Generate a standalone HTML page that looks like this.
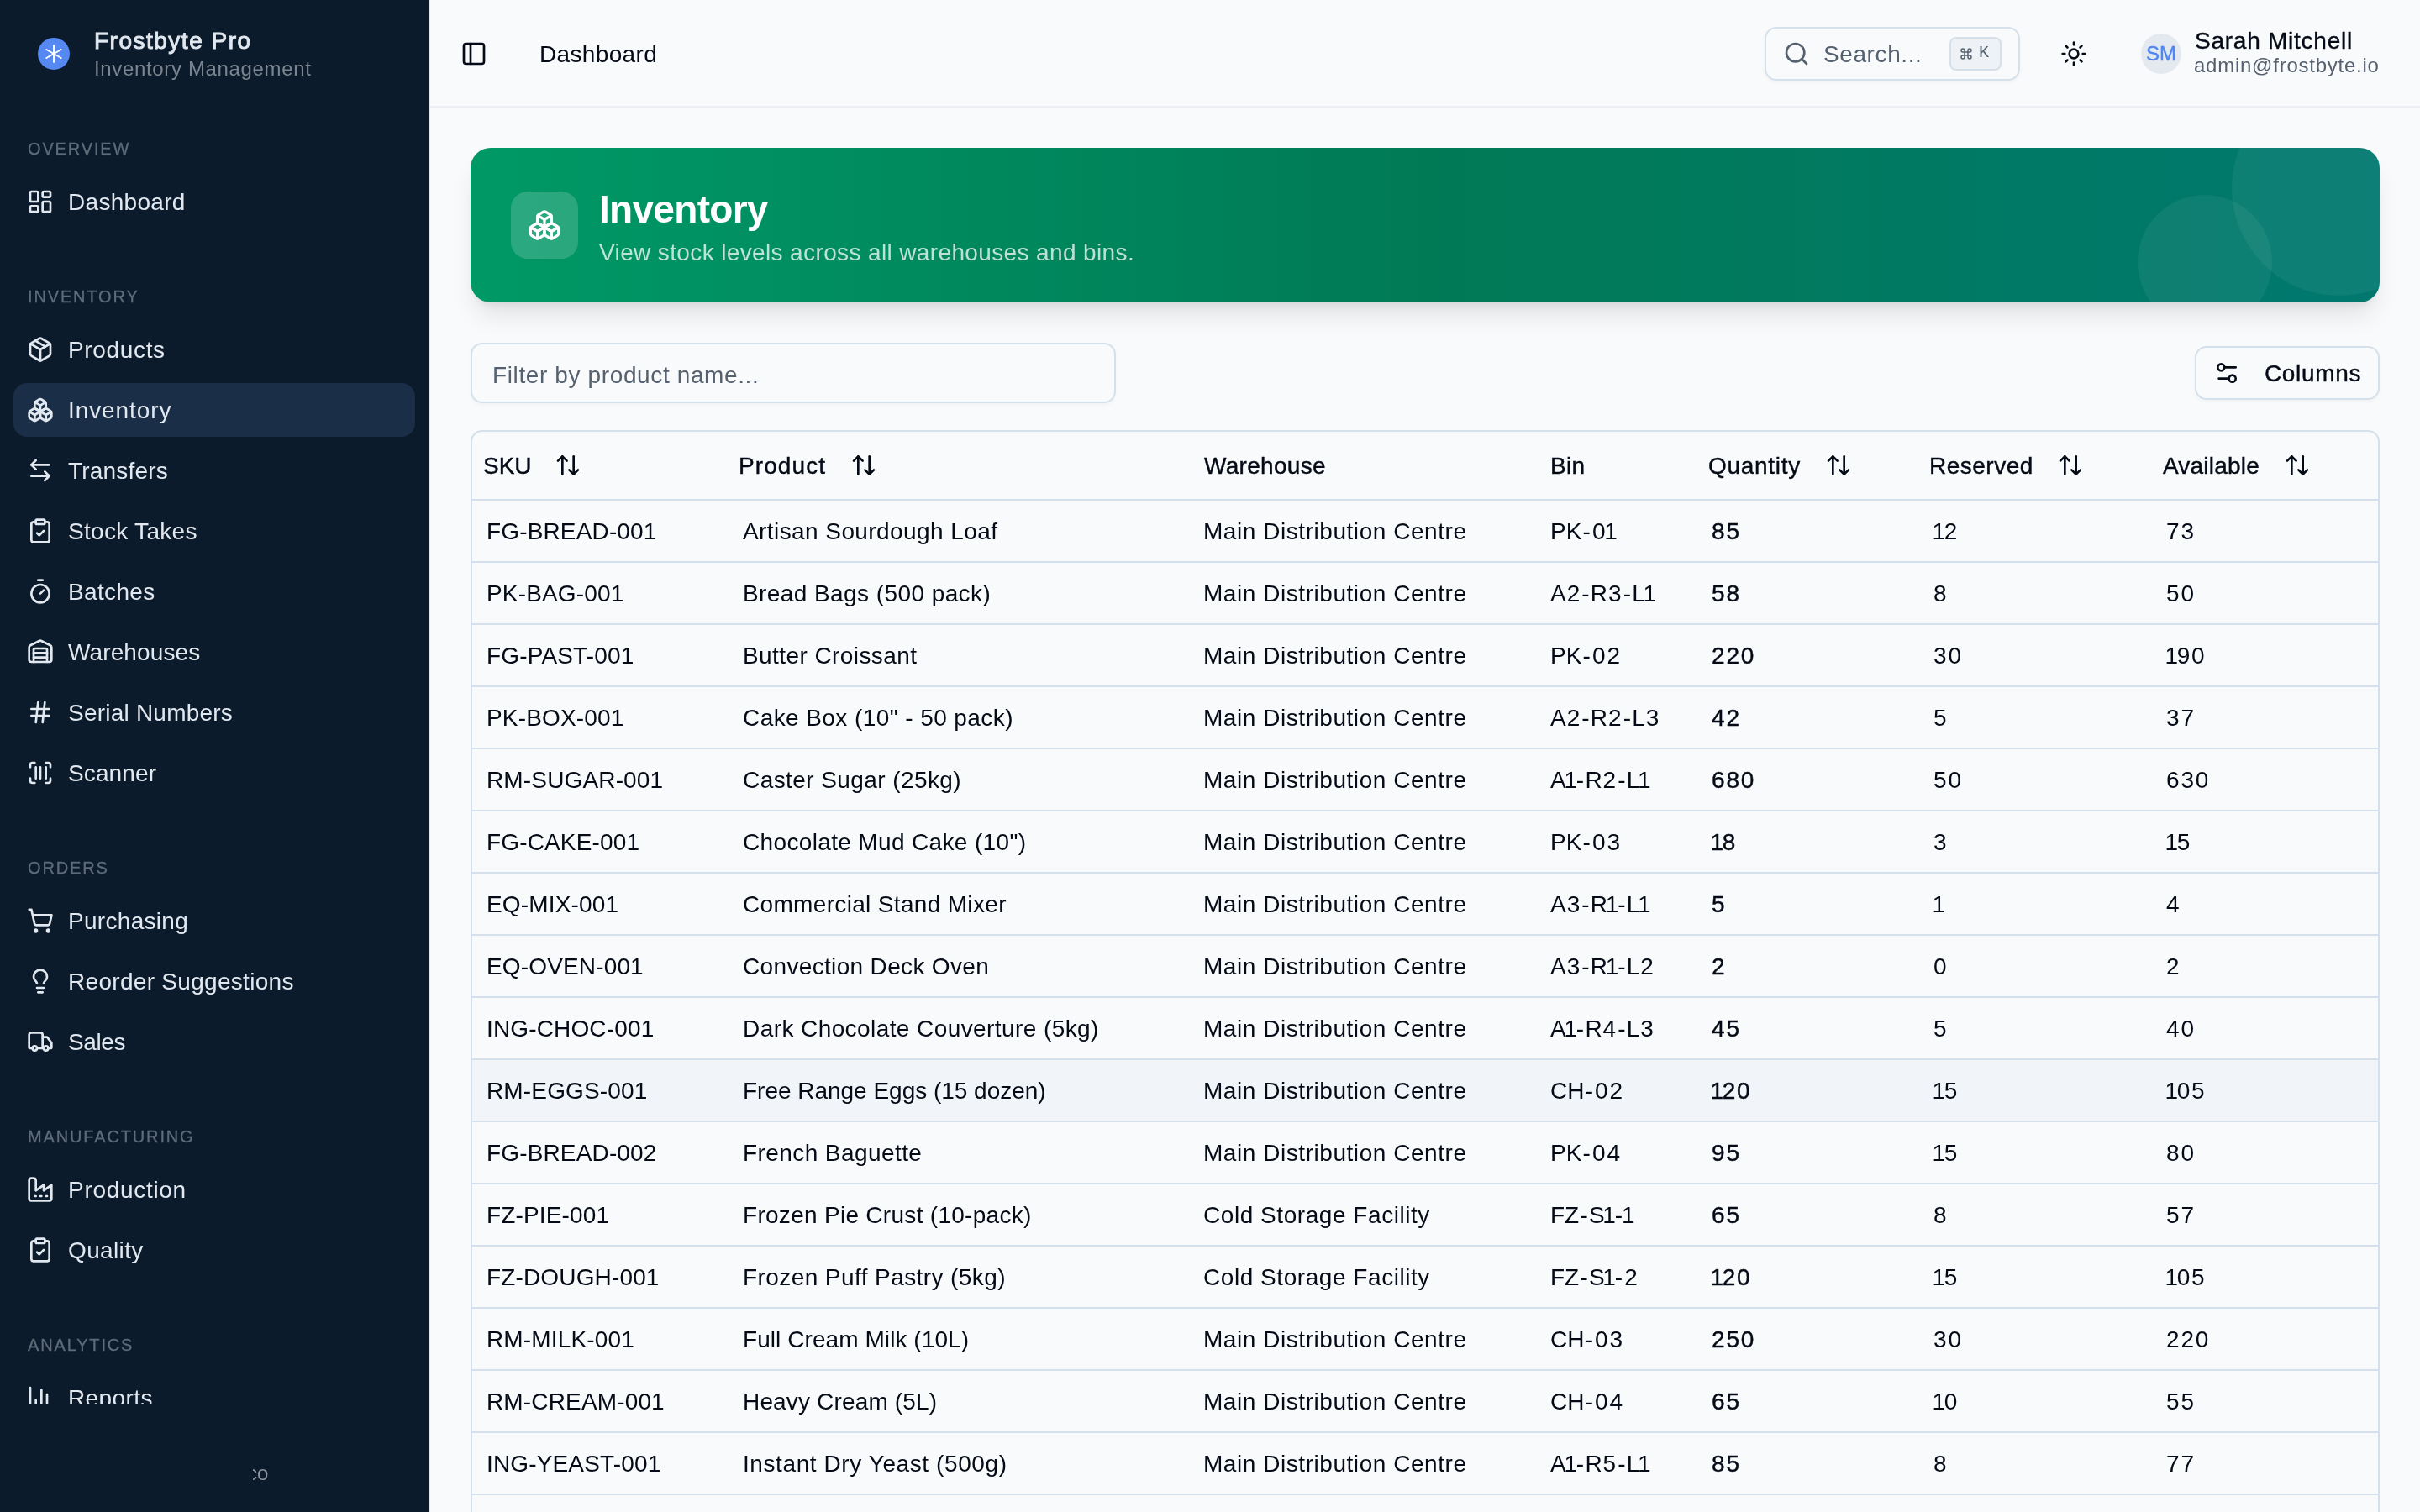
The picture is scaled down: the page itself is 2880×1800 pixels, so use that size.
<!DOCTYPE html><html lang="en"><head><meta charset="utf-8"><title>Inventory</title><style>
*{box-sizing:border-box;margin:0;padding:0}
html,body{width:2880px;height:1800px;overflow:hidden;background:#f9fafc}
body{font-family:"Liberation Sans",sans-serif;color:#050b16;position:relative;font-size:28px;line-height:1}
#sb,#hd,#banner,#tbl,body>.t{will-change:transform}
i{font-style:normal}.dn{margin:0 .95px}.d1{margin:0 -2.3px}.d1f{margin:0 -2.3px 0 -.6px}.hy{margin:0 1.2px}
.abs{position:absolute}
.t{position:absolute;white-space:nowrap;line-height:40px;height:40px}
.med{-webkit-text-stroke:0.42px currentColor}
#sb{position:absolute;left:0;top:0;width:512px;height:1800px;background:#0b1b2b;border-right:2px solid #dfe6ee;color:#e2e8f0}
#nav{position:absolute;left:0;top:128px;width:510px;height:1544px;overflow:hidden}
.gl{position:absolute;left:33px;font-size:20px;line-height:28px;height:28px;color:#5f6b78;white-space:nowrap;-webkit-text-stroke:0.3px currentColor}
.ni{position:absolute;left:16px;width:478px;height:64px;border-radius:16px}
.ni.act{background:#1a2e47}
.ni svg{position:absolute;left:16px;top:16px}
.ni span{position:absolute;left:65px;top:12px;line-height:40px;white-space:nowrap;font-size:28px}
#hd{position:absolute;left:512px;top:0;width:2368px;height:128px;border-bottom:2px solid #ebeef2}
#banner{position:absolute;left:560px;top:176px;width:2272px;height:184px;border-radius:24px;overflow:hidden;
 background:linear-gradient(90deg,#009966 0%,#007a55 50%,#00786f 100%)}
#bshadow{position:absolute;left:560px;top:176px;width:2272px;height:184px;border-radius:24px;
 box-shadow:0 20px 30px -6px rgba(0,0,0,.10),0 8px 12px -8px rgba(0,0,0,.10)}
.circ{position:absolute;border-radius:50%;background:rgba(255,255,255,.055)}
#tbl{position:absolute;left:560px;top:512px;width:2272px;height:1400px;border:2px solid #d6e0ea;border-radius:14px;overflow:hidden}
.row{position:absolute;left:0;width:2268px;height:74px;border-bottom:2px solid #d6e0ea}
.row.hov{background:#f1f5f9}
.c{position:absolute;top:16px;line-height:40px;height:40px;white-space:nowrap;font-size:28px}
.hrow{position:absolute;left:0;top:0;width:2268px;height:82px;border-bottom:2px solid #d6e0ea}
.h{position:absolute;top:20px;line-height:40px;height:40px;white-space:nowrap;font-size:28px}
</style></head><body>
<div id="sb">
<div class="abs" style="left:45px;top:45px;width:38px;height:38px;border-radius:50%;background:#5588f0"></div>
<svg class="abs" style="left:45px;top:45px" width="38" height="38" viewBox="0 0 38 38" fill="none" stroke="#fff" stroke-width="2" stroke-linecap="round"><path d="M19 9v20"/><path d="M10.300 14l17.400 10"/><path d="M27.700 14l-17.400 10"/></svg>
<div class="t" id="brand" style="left:112px;top:29px;font-size:28px;-webkit-text-stroke:0.95px currentColor;color:#e2e8f0;letter-spacing:1.5px;">Frostbyte Pro</div>
<div class="t" id="brand2" style="left:112px;top:62px;font-size:24px;color:#7b858f;letter-spacing:0.65px;">Inventory Management</div>
<div id="nav">
<div class="gl" id="gl0" style="top:35px;letter-spacing:1.85px;">OVERVIEW</div>
<div class="ni" style="top:80px"><svg width="32" height="32" viewBox="0 0 24 24" fill="none" stroke="currentColor" stroke-width="2" stroke-linecap="round" stroke-linejoin="round" style=""><rect width="7" height="9" x="3" y="3" rx="1"/><rect width="7" height="5" x="14" y="3" rx="1"/><rect width="7" height="9" x="14" y="12" rx="1"/><rect width="7" height="5" x="3" y="16" rx="1"/></svg><span id="ni_Dashboard" style="top:13px;letter-spacing:0.3px">Dashboard</span></div>
<div class="gl" id="gl1" style="top:211px;letter-spacing:1.85px;">INVENTORY</div>
<div class="ni" style="top:256px"><svg width="32" height="32" viewBox="0 0 24 24" fill="none" stroke="currentColor" stroke-width="2" stroke-linecap="round" stroke-linejoin="round" style=""><path d="M11 21.73a2 2 0 0 0 2 0l7-4A2 2 0 0 0 21 16V8a2 2 0 0 0-1-1.73l-7-4a2 2 0 0 0-2 0l-7 4A2 2 0 0 0 3 8v8a2 2 0 0 0 1 1.73z"/><path d="M12 22V12"/><path d="M3.29 7 12 12l8.71-5"/><path d="m7.5 4.27 9 5.15"/></svg><span id="ni_Products" style="top:13px;letter-spacing:0.66px">Products</span></div>
<div class="ni act" style="top:328px"><svg width="32" height="32" viewBox="0 0 24 24" fill="none" stroke="currentColor" stroke-width="2" stroke-linecap="round" stroke-linejoin="round" style=""><path d="M2.97 12.92A2 2 0 0 0 2 14.63v3.24a2 2 0 0 0 .97 1.71l3 1.8a2 2 0 0 0 2.06 0L12 19v-5.5l-5-3-4.03 2.42Z"/><path d="m7 16.5-4.74-2.85"/><path d="m7 16.5 5-3"/><path d="M7 16.5v5.17"/><path d="M12 13.5V19l3.97 2.38a2 2 0 0 0 2.06 0l3-1.8a2 2 0 0 0 .97-1.71v-3.24a2 2 0 0 0-.97-1.71L17 10.5l-5 3Z"/><path d="m17 16.5-5-3"/><path d="m17 16.5 4.74-2.85"/><path d="M17 16.5v5.17"/><path d="M7.97 4.42A2 2 0 0 0 7 6.13v4.37l5 3 5-3V6.13a2 2 0 0 0-.97-1.71l-3-1.8a2 2 0 0 0-2.06 0l-3 1.8Z"/><path d="M12 8 7.26 5.15"/><path d="m12 8 4.74-2.85"/><path d="M12 13.5V8"/></svg><span id="ni_Inventory" style="top:13px;letter-spacing:0.92px">Inventory</span></div>
<div class="ni" style="top:400px"><svg width="32" height="32" viewBox="0 0 24 24" fill="none" stroke="currentColor" stroke-width="2" stroke-linecap="round" stroke-linejoin="round" style=""><path d="M8 3 4 7l4 4"/><path d="M4 7h16"/><path d="m16 21 4-4-4-4"/><path d="M20 17H4"/></svg><span id="ni_Transfers" style="top:13px;letter-spacing:0.2px">Transfers</span></div>
<div class="ni" style="top:472px"><svg width="32" height="32" viewBox="0 0 24 24" fill="none" stroke="currentColor" stroke-width="2" stroke-linecap="round" stroke-linejoin="round" style=""><rect width="8" height="4" x="8" y="2" rx="1" ry="1"/><path d="M16 4h2a2 2 0 0 1 2 2v14a2 2 0 0 1-2 2H6a2 2 0 0 1-2-2V6a2 2 0 0 1 2-2h2"/><path d="m9 14 2 2 4-4"/></svg><span id="ni_Stock_Takes" style="top:13px;letter-spacing:0.3px">Stock Takes</span></div>
<div class="ni" style="top:544px"><svg width="32" height="32" viewBox="0 0 24 24" fill="none" stroke="currentColor" stroke-width="2" stroke-linecap="round" stroke-linejoin="round" style=""><path d="M10 2h4"/><path d="M12 14l3-3"/><circle cx="12" cy="14" r="8"/></svg><span id="ni_Batches" style="top:13px;letter-spacing:0.35px">Batches</span></div>
<div class="ni" style="top:616px"><svg width="32" height="32" viewBox="0 0 24 24" fill="none" stroke="currentColor" stroke-width="2" stroke-linecap="round" stroke-linejoin="round" style=""><path d="M18 21V10a1 1 0 0 0-1-1H7a1 1 0 0 0-1 1v11"/><path d="M22 19a2 2 0 0 1-2 2H4a2 2 0 0 1-2-2V8a2 2 0 0 1 1.132-1.803l7.950-3.974a2 2 0 0 1 1.837 0l7.948 3.974A2 2 0 0 1 22 8z"/><path d="M6 13h12"/><path d="M6 17h12"/></svg><span id="ni_Warehouses" style="top:13px;letter-spacing:0.12px">Warehouses</span></div>
<div class="ni" style="top:688px"><svg width="32" height="32" viewBox="0 0 24 24" fill="none" stroke="currentColor" stroke-width="2" stroke-linecap="round" stroke-linejoin="round" style=""><path d="M4 9h16"/><path d="M4 15h16"/><path d="M10 3 8 21"/><path d="M16 3l-2 18"/></svg><span id="ni_Serial_Numbers" style="top:13px;letter-spacing:0.22px">Serial Numbers</span></div>
<div class="ni" style="top:760px"><svg width="32" height="32" viewBox="0 0 24 24" fill="none" stroke="currentColor" stroke-width="2" stroke-linecap="round" stroke-linejoin="round" style=""><path d="M3 7V5a2 2 0 0 1 2-2h2"/><path d="M17 3h2a2 2 0 0 1 2 2v2"/><path d="M21 17v2a2 2 0 0 1-2 2h-2"/><path d="M7 21H5a2 2 0 0 1-2-2v-2"/><path d="M8 7v10"/><path d="M12 7v10"/><path d="M17 7v10"/></svg><span id="ni_Scanner" style="top:13px;letter-spacing:0.12px">Scanner</span></div>
<div class="gl" id="gl2" style="top:891px;letter-spacing:1.85px;">ORDERS</div>
<div class="ni" style="top:936px"><svg width="32" height="32" viewBox="0 0 24 24" fill="none" stroke="currentColor" stroke-width="2" stroke-linecap="round" stroke-linejoin="round" style=""><circle cx="8" cy="21" r="1"/><circle cx="19" cy="21" r="1"/><path d="M2.05 2.05h2l2.660 12.420a2 2 0 0 0 2 1.580h9.780a2 2 0 0 0 1.950-1.570l1.650-7.430H5.120"/></svg><span id="ni_Purchasing" style="top:13px;letter-spacing:0.3px">Purchasing</span></div>
<div class="ni" style="top:1008px"><svg width="32" height="32" viewBox="0 0 24 24" fill="none" stroke="currentColor" stroke-width="2" stroke-linecap="round" stroke-linejoin="round" style=""><path d="M15 14c.2-1 .7-1.700 1.500-2.500 1-.9 1.500-2.200 1.500-3.500A6 6 0 0 0 6 8c0 1 .2 2.200 1.500 3.500.7.700 1.300 1.500 1.500 2.500"/><path d="M9 18h6"/><path d="M10 22h4"/></svg><span id="ni_Reorder_Suggestions" style="top:13px;letter-spacing:0.3px">Reorder Suggestions</span></div>
<div class="ni" style="top:1080px"><svg width="32" height="32" viewBox="0 0 24 24" fill="none" stroke="currentColor" stroke-width="2" stroke-linecap="round" stroke-linejoin="round" style=""><path d="M14 18V6a2 2 0 0 0-2-2H4a2 2 0 0 0-2 2v11a1 1 0 0 0 1 1h2"/><path d="M15 18H9"/><path d="M19 18h2a1 1 0 0 0 1-1v-3.650a1 1 0 0 0-.220-.624l-3.480-4.350A1 1 0 0 0 17.520 8H14"/><circle cx="17" cy="18" r="2"/><circle cx="7" cy="18" r="2"/></svg><span id="ni_Sales" style="top:13px;letter-spacing:-0.4px">Sales</span></div>
<div class="gl" id="gl3" style="top:1211px;letter-spacing:1.85px;">MANUFACTURING</div>
<div class="ni" style="top:1256px"><svg width="32" height="32" viewBox="0 0 24 24" fill="none" stroke="currentColor" stroke-width="2" stroke-linecap="round" stroke-linejoin="round" style=""><path d="M2 20a2 2 0 0 0 2 2h16a2 2 0 0 0 2-2V8l-7 5V8l-7 5V4a2 2 0 0 0-2-2H4a2 2 0 0 0-2 2Z"/><path d="M17 18h1"/><path d="M12 18h1"/><path d="M7 18h1"/></svg><span id="ni_Production" style="top:13px;letter-spacing:0.7px">Production</span></div>
<div class="ni" style="top:1328px"><svg width="32" height="32" viewBox="0 0 24 24" fill="none" stroke="currentColor" stroke-width="2" stroke-linecap="round" stroke-linejoin="round" style=""><rect width="8" height="4" x="8" y="2" rx="1" ry="1"/><path d="M16 4h2a2 2 0 0 1 2 2v14a2 2 0 0 1-2 2H6a2 2 0 0 1-2-2V6a2 2 0 0 1 2-2h2"/><path d="m9 14 2 2 4-4"/></svg><span id="ni_Quality" style="top:13px;letter-spacing:0.37px">Quality</span></div>
<div class="gl" id="gl4" style="top:1459px;letter-spacing:1.85px;">ANALYTICS</div>
<div class="ni" style="top:1504px"><svg width="32" height="32" viewBox="0 0 24 24" fill="none" stroke="currentColor" stroke-width="2" stroke-linecap="round" stroke-linejoin="round" style=""><path d="M3 3v18h18"/><path d="M18 17V9"/><path d="M13 17V5"/><path d="M8 17v-3"/></svg><span id="ni_Reports" style="top:13px;letter-spacing:0.4px">Reports</span></div>
</div>
<div class="abs" style="left:301px;top:1736px;width:22px;height:36px;overflow:hidden"><span class="abs" style="left:-7px;top:0;line-height:36px;font-size:24px;color:#8d959e;white-space:nowrap">co</span></div>
</div>
<div id="hd">
<svg width="32" height="32" viewBox="0 0 24 24" fill="none" stroke="currentColor" stroke-width="2" stroke-linecap="round" stroke-linejoin="round" style="position:absolute;left:36px;top:48px;"><rect width="18" height="18" x="3" y="3" rx="2"/><path d="M9 3v18"/></svg>
<div class="t" id="crumb" style="left:130px;top:45px;letter-spacing:0.35px;">Dashboard</div>
<div class="abs" style="left:1588px;top:32px;width:304px;height:64px;border:2px solid #d6e0ea;border-radius:14px;box-shadow:0 2px 4px rgba(0,0,0,.035)"></div>
<svg width="32" height="32" viewBox="0 0 24 24" fill="none" stroke="#56616f" stroke-width="2" stroke-linecap="round" stroke-linejoin="round" style="position:absolute;left:1610px;top:48px;"><circle cx="11" cy="11" r="8"/><path d="m21 21-4.300-4.300"/></svg>
<div class="t" id="search" style="left:1658px;top:45px;color:#56616f;letter-spacing:0.6px;">Search...</div>
<div class="abs" style="left:1808px;top:44px;width:62px;height:40px;border:2px solid #d6e0ea;border-radius:8px;background:#eef1f5"></div>
<svg width="16" height="16" viewBox="0 0 24 24" fill="none" stroke="#56616f" stroke-width="2.2" stroke-linecap="round" stroke-linejoin="round" style="position:absolute;left:1820px;top:56px;"><path d="M15 6v12a3 3 0 1 0 3-3H6a3 3 0 1 0 3 3V6a3 3 0 1 0-3 3h12a3 3 0 1 0-3-3"/></svg>
<div class="t" id="kbdk" style="left:1843px;top:43px;font-size:20px;color:#56616f;font-family:'Liberation Mono',monospace">K</div>
<svg width="32" height="32" viewBox="0 0 24 24" fill="none" stroke="currentColor" stroke-width="2" stroke-linecap="round" stroke-linejoin="round" style="position:absolute;left:1940px;top:48px;"><circle cx="12" cy="12" r="4"/><path d="M12 2v2"/><path d="M12 20v2"/><path d="m4.930 4.930 1.410 1.410"/><path d="m17.660 17.660 1.410 1.410"/><path d="M2 12h2"/><path d="M20 12h2"/><path d="m6.340 17.660-1.410 1.410"/><path d="m19.070 4.930-1.410 1.410"/></svg>
<div class="abs" style="left:2036px;top:40px;width:48px;height:48px;border-radius:50%;background:#e4e9f0"></div>
<div class="t med" id="sm" style="left:2042px;top:44px;font-size:24px;color:#4f86f0;letter-spacing:0px;">SM</div>
<div class="t med" id="uname" style="left:2100px;top:29px;letter-spacing:0.75px;">Sarah Mitchell</div>
<div class="t" id="email" style="left:2099px;top:58px;font-size:24px;color:#56616f;letter-spacing:0.75px;">admin@frostbyte.io</div>
</div>
<div id="bshadow"></div><div id="banner">
<div class="circ" style="left:2096px;top:-80px;width:256px;height:256px"></div>
<div class="circ" style="left:1984px;top:56px;width:160px;height:160px"></div>
<div class="abs" style="left:48px;top:52px;width:80px;height:80px;border-radius:20px;background:rgba(255,255,255,.17)"></div>
<svg width="40" height="40" viewBox="0 0 24 24" fill="none" stroke="#fff" stroke-width="2" stroke-linecap="round" stroke-linejoin="round" style="position:absolute;left:68px;top:72px;"><path d="M2.97 12.92A2 2 0 0 0 2 14.63v3.24a2 2 0 0 0 .97 1.71l3 1.8a2 2 0 0 0 2.06 0L12 19v-5.5l-5-3-4.03 2.42Z"/><path d="m7 16.5-4.74-2.85"/><path d="m7 16.5 5-3"/><path d="M7 16.5v5.17"/><path d="M12 13.5V19l3.97 2.38a2 2 0 0 0 2.06 0l3-1.8a2 2 0 0 0 .97-1.71v-3.24a2 2 0 0 0-.97-1.71L17 10.5l-5 3Z"/><path d="m17 16.5-5-3"/><path d="m17 16.5 4.74-2.85"/><path d="M17 16.5v5.17"/><path d="M7.97 4.42A2 2 0 0 0 7 6.13v4.37l5 3 5-3V6.13a2 2 0 0 0-.97-1.71l-3-1.8a2 2 0 0 0-2.06 0l-3 1.8Z"/><path d="M12 8 7.26 5.15"/><path d="m12 8 4.74-2.85"/><path d="M12 13.5V8"/></svg>
<div class="t" id="title" style="left:153px;top:41px;font-size:46px;line-height:64px;height:64px;font-weight:bold;color:#fff;letter-spacing:-0.7px;">Inventory</div>
<div class="t" id="sub" style="left:153px;top:105px;color:rgba(255,255,255,.74);letter-spacing:0.37px;">View stock levels across all warehouses and bins.</div>
</div>
<div class="abs" style="left:560px;top:408px;width:768px;height:72px;border:2px solid #d6e0ea;border-radius:14px;box-shadow:0 2px 4px rgba(0,0,0,.035)"></div>
<div class="t" id="filter" style="left:586px;top:427px;color:#56616f;letter-spacing:0.62px;">Filter by product name...</div>
<div class="abs" style="left:2612px;top:412px;width:220px;height:64px;border:2px solid #d6e0ea;border-radius:14px;box-shadow:0 2px 4px rgba(0,0,0,.035)"></div>
<svg width="32" height="32" viewBox="0 0 24 24" fill="none" stroke="currentColor" stroke-width="2" stroke-linecap="round" stroke-linejoin="round" style="position:absolute;left:2634px;top:428px;"><path d="M20 7h-9"/><path d="M14 17H5"/><circle cx="17" cy="17" r="3"/><circle cx="7" cy="7" r="3"/></svg>
<div class="t med" id="columns" style="left:2695px;top:425px;letter-spacing:0.65px;">Columns</div>
<div id="tbl">
<div class="hrow">
<div class="h med" id="h_sku" style="left:13px;top:21px;letter-spacing:0px;">SKU</div>
<svg width="32" height="32" viewBox="0 0 24 24" fill="none" stroke="currentColor" stroke-width="2" stroke-linecap="round" stroke-linejoin="round" style="position:absolute;left:98px;top:24px;"><path d="m21 16-4 4-4-4"/><path d="M17 20V4"/><path d="m3 8 4-4 4 4"/><path d="M7 4v16"/></svg>
<div class="h med" id="h_product" style="left:317px;top:21px;letter-spacing:1.1px;">Product</div>
<svg width="32" height="32" viewBox="0 0 24 24" fill="none" stroke="currentColor" stroke-width="2" stroke-linecap="round" stroke-linejoin="round" style="position:absolute;left:450px;top:24px;"><path d="m21 16-4 4-4-4"/><path d="M17 20V4"/><path d="m3 8 4-4 4 4"/><path d="M7 4v16"/></svg>
<div class="h med" id="h_wh" style="left:871px;top:21px;letter-spacing:0.3px;">Warehouse</div>
<div class="h med" id="h_bin" style="left:1283px;top:21px;letter-spacing:0.3px;">Bin</div>
<div class="h med" id="h_qty" style="left:1471px;top:21px;letter-spacing:0.7px;">Quantity</div>
<svg width="32" height="32" viewBox="0 0 24 24" fill="none" stroke="currentColor" stroke-width="2" stroke-linecap="round" stroke-linejoin="round" style="position:absolute;left:1610px;top:24px;"><path d="m21 16-4 4-4-4"/><path d="M17 20V4"/><path d="m3 8 4-4 4 4"/><path d="M7 4v16"/></svg>
<div class="h med" id="h_res" style="left:1734px;top:21px;letter-spacing:0.5px;">Reserved</div>
<svg width="32" height="32" viewBox="0 0 24 24" fill="none" stroke="currentColor" stroke-width="2" stroke-linecap="round" stroke-linejoin="round" style="position:absolute;left:1886px;top:24px;"><path d="m21 16-4 4-4-4"/><path d="M17 20V4"/><path d="m3 8 4-4 4 4"/><path d="M7 4v16"/></svg>
<div class="h med" id="h_av" style="left:2012px;top:21px;letter-spacing:0.2px;">Available</div>
<svg width="32" height="32" viewBox="0 0 24 24" fill="none" stroke="currentColor" stroke-width="2" stroke-linecap="round" stroke-linejoin="round" style="position:absolute;left:2156px;top:24px;"><path d="m21 16-4 4-4-4"/><path d="M17 20V4"/><path d="m3 8 4-4 4 4"/><path d="M7 4v16"/></svg>
</div>
<div class="row" style="top:82px">
<div class="c" id="r0c_sku" style="left:17px;top:17px;letter-spacing:0.15px;">FG-BREAD-001</div>
<div class="c" id="r0c_product" style="left:322px;top:17px;letter-spacing:0.42px;">Artisan Sourdough Loaf</div>
<div class="c" id="r0c_wh" style="left:870px;top:17px;letter-spacing:0.55px;">Main Distribution Centre</div>
<div class="c" id="r0c_bin" style="left:1283px;top:17px;letter-spacing:0px;">PK<i class="hy">-</i><i class="dn">0</i><i class="d1">1</i></div>
<div class="c med" id="r0c_qty" style="left:1474px;top:17px;letter-spacing:0px;"><i class="dn">8</i><i class="dn">5</i></div>
<div class="c" id="r0c_res" style="left:1738px;top:17px;letter-spacing:0px;"><i class="d1f">1</i><i class="dn">2</i></div>
<div class="c" id="r0c_av" style="left:2015px;top:17px;letter-spacing:0px;"><i class="dn">7</i><i class="dn">3</i></div>
</div>
<div class="row" style="top:156px">
<div class="c" id="r1c_sku" style="left:17px;top:17px;letter-spacing:0.15px;">PK-BAG-001</div>
<div class="c" id="r1c_product" style="left:322px;top:17px;letter-spacing:0.42px;">Bread Bags (500 pack)</div>
<div class="c" id="r1c_wh" style="left:870px;top:17px;letter-spacing:0.55px;">Main Distribution Centre</div>
<div class="c" id="r1c_bin" style="left:1283px;top:17px;letter-spacing:0px;">A<i class="dn">2</i><i class="hy">-</i>R<i class="dn">3</i><i class="hy">-</i>L<i class="d1">1</i></div>
<div class="c med" id="r1c_qty" style="left:1474px;top:17px;letter-spacing:0px;"><i class="dn">5</i><i class="dn">8</i></div>
<div class="c" id="r1c_res" style="left:1738px;top:17px;letter-spacing:0px;"><i class="dn">8</i></div>
<div class="c" id="r1c_av" style="left:2015px;top:17px;letter-spacing:0px;"><i class="dn">5</i><i class="dn">0</i></div>
</div>
<div class="row" style="top:230px">
<div class="c" id="r2c_sku" style="left:17px;top:17px;letter-spacing:0.15px;">FG-PAST-001</div>
<div class="c" id="r2c_product" style="left:322px;top:17px;letter-spacing:0.42px;">Butter Croissant</div>
<div class="c" id="r2c_wh" style="left:870px;top:17px;letter-spacing:0.55px;">Main Distribution Centre</div>
<div class="c" id="r2c_bin" style="left:1283px;top:17px;letter-spacing:0px;">PK<i class="hy">-</i><i class="dn">0</i><i class="dn">2</i></div>
<div class="c med" id="r2c_qty" style="left:1474px;top:17px;letter-spacing:0px;"><i class="dn">2</i><i class="dn">2</i><i class="dn">0</i></div>
<div class="c" id="r2c_res" style="left:1738px;top:17px;letter-spacing:0px;"><i class="dn">3</i><i class="dn">0</i></div>
<div class="c" id="r2c_av" style="left:2015px;top:17px;letter-spacing:0px;"><i class="d1f">1</i><i class="dn">9</i><i class="dn">0</i></div>
</div>
<div class="row" style="top:304px">
<div class="c" id="r3c_sku" style="left:17px;top:17px;letter-spacing:0.15px;">PK-BOX-001</div>
<div class="c" id="r3c_product" style="left:322px;top:17px;letter-spacing:0.42px;">Cake Box (10&quot; - 50 pack)</div>
<div class="c" id="r3c_wh" style="left:870px;top:17px;letter-spacing:0.55px;">Main Distribution Centre</div>
<div class="c" id="r3c_bin" style="left:1283px;top:17px;letter-spacing:0px;">A<i class="dn">2</i><i class="hy">-</i>R<i class="dn">2</i><i class="hy">-</i>L<i class="dn">3</i></div>
<div class="c med" id="r3c_qty" style="left:1474px;top:17px;letter-spacing:0px;"><i class="dn">4</i><i class="dn">2</i></div>
<div class="c" id="r3c_res" style="left:1738px;top:17px;letter-spacing:0px;"><i class="dn">5</i></div>
<div class="c" id="r3c_av" style="left:2015px;top:17px;letter-spacing:0px;"><i class="dn">3</i><i class="dn">7</i></div>
</div>
<div class="row" style="top:378px">
<div class="c" id="r4c_sku" style="left:17px;top:17px;letter-spacing:0.15px;">RM-SUGAR-001</div>
<div class="c" id="r4c_product" style="left:322px;top:17px;letter-spacing:0.42px;">Caster Sugar (25kg)</div>
<div class="c" id="r4c_wh" style="left:870px;top:17px;letter-spacing:0.55px;">Main Distribution Centre</div>
<div class="c" id="r4c_bin" style="left:1283px;top:17px;letter-spacing:0px;">A<i class="d1">1</i><i class="hy">-</i>R<i class="dn">2</i><i class="hy">-</i>L<i class="d1">1</i></div>
<div class="c med" id="r4c_qty" style="left:1474px;top:17px;letter-spacing:0px;"><i class="dn">6</i><i class="dn">8</i><i class="dn">0</i></div>
<div class="c" id="r4c_res" style="left:1738px;top:17px;letter-spacing:0px;"><i class="dn">5</i><i class="dn">0</i></div>
<div class="c" id="r4c_av" style="left:2015px;top:17px;letter-spacing:0px;"><i class="dn">6</i><i class="dn">3</i><i class="dn">0</i></div>
</div>
<div class="row" style="top:452px">
<div class="c" id="r5c_sku" style="left:17px;top:17px;letter-spacing:0.15px;">FG-CAKE-001</div>
<div class="c" id="r5c_product" style="left:322px;top:17px;letter-spacing:0.35px;">Chocolate Mud Cake (10&quot;)</div>
<div class="c" id="r5c_wh" style="left:870px;top:17px;letter-spacing:0.55px;">Main Distribution Centre</div>
<div class="c" id="r5c_bin" style="left:1283px;top:17px;letter-spacing:0px;">PK<i class="hy">-</i><i class="dn">0</i><i class="dn">3</i></div>
<div class="c med" id="r5c_qty" style="left:1474px;top:17px;letter-spacing:0px;"><i class="d1f">1</i><i class="dn">8</i></div>
<div class="c" id="r5c_res" style="left:1738px;top:17px;letter-spacing:0px;"><i class="dn">3</i></div>
<div class="c" id="r5c_av" style="left:2015px;top:17px;letter-spacing:0px;"><i class="d1f">1</i><i class="dn">5</i></div>
</div>
<div class="row" style="top:526px">
<div class="c" id="r6c_sku" style="left:17px;top:17px;letter-spacing:0.15px;">EQ-MIX-001</div>
<div class="c" id="r6c_product" style="left:322px;top:17px;letter-spacing:0.33px;">Commercial Stand Mixer</div>
<div class="c" id="r6c_wh" style="left:870px;top:17px;letter-spacing:0.55px;">Main Distribution Centre</div>
<div class="c" id="r6c_bin" style="left:1283px;top:17px;letter-spacing:0px;">A<i class="dn">3</i><i class="hy">-</i>R<i class="d1">1</i><i class="hy">-</i>L<i class="d1">1</i></div>
<div class="c med" id="r6c_qty" style="left:1474px;top:17px;letter-spacing:0px;"><i class="dn">5</i></div>
<div class="c" id="r6c_res" style="left:1738px;top:17px;letter-spacing:0px;"><i class="d1f">1</i></div>
<div class="c" id="r6c_av" style="left:2015px;top:17px;letter-spacing:0px;"><i class="dn">4</i></div>
</div>
<div class="row" style="top:600px">
<div class="c" id="r7c_sku" style="left:17px;top:17px;letter-spacing:0.15px;">EQ-OVEN-001</div>
<div class="c" id="r7c_product" style="left:322px;top:17px;letter-spacing:0.34px;">Convection Deck Oven</div>
<div class="c" id="r7c_wh" style="left:870px;top:17px;letter-spacing:0.55px;">Main Distribution Centre</div>
<div class="c" id="r7c_bin" style="left:1283px;top:17px;letter-spacing:0px;">A<i class="dn">3</i><i class="hy">-</i>R<i class="d1">1</i><i class="hy">-</i>L<i class="dn">2</i></div>
<div class="c med" id="r7c_qty" style="left:1474px;top:17px;letter-spacing:0px;"><i class="dn">2</i></div>
<div class="c" id="r7c_res" style="left:1738px;top:17px;letter-spacing:0px;"><i class="dn">0</i></div>
<div class="c" id="r7c_av" style="left:2015px;top:17px;letter-spacing:0px;"><i class="dn">2</i></div>
</div>
<div class="row" style="top:674px">
<div class="c" id="r8c_sku" style="left:17px;top:17px;letter-spacing:0.15px;">ING-CHOC-001</div>
<div class="c" id="r8c_product" style="left:322px;top:17px;letter-spacing:0.42px;">Dark Chocolate Couverture (5kg)</div>
<div class="c" id="r8c_wh" style="left:870px;top:17px;letter-spacing:0.55px;">Main Distribution Centre</div>
<div class="c" id="r8c_bin" style="left:1283px;top:17px;letter-spacing:0px;">A<i class="d1">1</i><i class="hy">-</i>R<i class="dn">4</i><i class="hy">-</i>L<i class="dn">3</i></div>
<div class="c med" id="r8c_qty" style="left:1474px;top:17px;letter-spacing:0px;"><i class="dn">4</i><i class="dn">5</i></div>
<div class="c" id="r8c_res" style="left:1738px;top:17px;letter-spacing:0px;"><i class="dn">5</i></div>
<div class="c" id="r8c_av" style="left:2015px;top:17px;letter-spacing:0px;"><i class="dn">4</i><i class="dn">0</i></div>
</div>
<div class="row hov" style="top:748px">
<div class="c" id="r9c_sku" style="left:17px;top:17px;letter-spacing:0.15px;">RM-EGGS-001</div>
<div class="c" id="r9c_product" style="left:322px;top:17px;letter-spacing:-0.02px;">Free Range Eggs (15 dozen)</div>
<div class="c" id="r9c_wh" style="left:870px;top:17px;letter-spacing:0.55px;">Main Distribution Centre</div>
<div class="c" id="r9c_bin" style="left:1283px;top:17px;letter-spacing:0px;">CH<i class="hy">-</i><i class="dn">0</i><i class="dn">2</i></div>
<div class="c med" id="r9c_qty" style="left:1474px;top:17px;letter-spacing:0px;"><i class="d1f">1</i><i class="dn">2</i><i class="dn">0</i></div>
<div class="c" id="r9c_res" style="left:1738px;top:17px;letter-spacing:0px;"><i class="d1f">1</i><i class="dn">5</i></div>
<div class="c" id="r9c_av" style="left:2015px;top:17px;letter-spacing:0px;"><i class="d1f">1</i><i class="dn">0</i><i class="dn">5</i></div>
</div>
<div class="row" style="top:822px">
<div class="c" id="r10c_sku" style="left:17px;top:17px;letter-spacing:0.15px;">FG-BREAD-002</div>
<div class="c" id="r10c_product" style="left:322px;top:17px;letter-spacing:0.42px;">French Baguette</div>
<div class="c" id="r10c_wh" style="left:870px;top:17px;letter-spacing:0.55px;">Main Distribution Centre</div>
<div class="c" id="r10c_bin" style="left:1283px;top:17px;letter-spacing:0px;">PK<i class="hy">-</i><i class="dn">0</i><i class="dn">4</i></div>
<div class="c med" id="r10c_qty" style="left:1474px;top:17px;letter-spacing:0px;"><i class="dn">9</i><i class="dn">5</i></div>
<div class="c" id="r10c_res" style="left:1738px;top:17px;letter-spacing:0px;"><i class="d1f">1</i><i class="dn">5</i></div>
<div class="c" id="r10c_av" style="left:2015px;top:17px;letter-spacing:0px;"><i class="dn">8</i><i class="dn">0</i></div>
</div>
<div class="row" style="top:896px">
<div class="c" id="r11c_sku" style="left:17px;top:17px;letter-spacing:0.15px;">FZ-PIE-001</div>
<div class="c" id="r11c_product" style="left:322px;top:17px;letter-spacing:0.29px;">Frozen Pie Crust (10-pack)</div>
<div class="c" id="r11c_wh" style="left:870px;top:17px;letter-spacing:0.55px;">Cold Storage Facility</div>
<div class="c" id="r11c_bin" style="left:1283px;top:17px;letter-spacing:0px;">FZ<i class="hy">-</i>S<i class="d1">1</i><i class="hy">-</i><i class="d1">1</i></div>
<div class="c med" id="r11c_qty" style="left:1474px;top:17px;letter-spacing:0px;"><i class="dn">6</i><i class="dn">5</i></div>
<div class="c" id="r11c_res" style="left:1738px;top:17px;letter-spacing:0px;"><i class="dn">8</i></div>
<div class="c" id="r11c_av" style="left:2015px;top:17px;letter-spacing:0px;"><i class="dn">5</i><i class="dn">7</i></div>
</div>
<div class="row" style="top:970px">
<div class="c" id="r12c_sku" style="left:17px;top:17px;letter-spacing:0.15px;">FZ-DOUGH-001</div>
<div class="c" id="r12c_product" style="left:322px;top:17px;letter-spacing:0.42px;">Frozen Puff Pastry (5kg)</div>
<div class="c" id="r12c_wh" style="left:870px;top:17px;letter-spacing:0.55px;">Cold Storage Facility</div>
<div class="c" id="r12c_bin" style="left:1283px;top:17px;letter-spacing:0px;">FZ<i class="hy">-</i>S<i class="d1">1</i><i class="hy">-</i><i class="dn">2</i></div>
<div class="c med" id="r12c_qty" style="left:1474px;top:17px;letter-spacing:0px;"><i class="d1f">1</i><i class="dn">2</i><i class="dn">0</i></div>
<div class="c" id="r12c_res" style="left:1738px;top:17px;letter-spacing:0px;"><i class="d1f">1</i><i class="dn">5</i></div>
<div class="c" id="r12c_av" style="left:2015px;top:17px;letter-spacing:0px;"><i class="d1f">1</i><i class="dn">0</i><i class="dn">5</i></div>
</div>
<div class="row" style="top:1044px">
<div class="c" id="r13c_sku" style="left:17px;top:17px;letter-spacing:0.15px;">RM-MILK-001</div>
<div class="c" id="r13c_product" style="left:322px;top:17px;letter-spacing:0.07px;">Full Cream Milk (10L)</div>
<div class="c" id="r13c_wh" style="left:870px;top:17px;letter-spacing:0.55px;">Main Distribution Centre</div>
<div class="c" id="r13c_bin" style="left:1283px;top:17px;letter-spacing:0px;">CH<i class="hy">-</i><i class="dn">0</i><i class="dn">3</i></div>
<div class="c med" id="r13c_qty" style="left:1474px;top:17px;letter-spacing:0px;"><i class="dn">2</i><i class="dn">5</i><i class="dn">0</i></div>
<div class="c" id="r13c_res" style="left:1738px;top:17px;letter-spacing:0px;"><i class="dn">3</i><i class="dn">0</i></div>
<div class="c" id="r13c_av" style="left:2015px;top:17px;letter-spacing:0px;"><i class="dn">2</i><i class="dn">2</i><i class="dn">0</i></div>
</div>
<div class="row" style="top:1118px">
<div class="c" id="r14c_sku" style="left:17px;top:17px;letter-spacing:0.15px;">RM-CREAM-001</div>
<div class="c" id="r14c_product" style="left:322px;top:17px;letter-spacing:0.16px;">Heavy Cream (5L)</div>
<div class="c" id="r14c_wh" style="left:870px;top:17px;letter-spacing:0.55px;">Main Distribution Centre</div>
<div class="c" id="r14c_bin" style="left:1283px;top:17px;letter-spacing:0px;">CH<i class="hy">-</i><i class="dn">0</i><i class="dn">4</i></div>
<div class="c med" id="r14c_qty" style="left:1474px;top:17px;letter-spacing:0px;"><i class="dn">6</i><i class="dn">5</i></div>
<div class="c" id="r14c_res" style="left:1738px;top:17px;letter-spacing:0px;"><i class="d1f">1</i><i class="dn">0</i></div>
<div class="c" id="r14c_av" style="left:2015px;top:17px;letter-spacing:0px;"><i class="dn">5</i><i class="dn">5</i></div>
</div>
<div class="row" style="top:1192px">
<div class="c" id="r15c_sku" style="left:17px;top:17px;letter-spacing:0.15px;">ING-YEAST-001</div>
<div class="c" id="r15c_product" style="left:322px;top:17px;letter-spacing:0.59px;">Instant Dry Yeast (500g)</div>
<div class="c" id="r15c_wh" style="left:870px;top:17px;letter-spacing:0.55px;">Main Distribution Centre</div>
<div class="c" id="r15c_bin" style="left:1283px;top:17px;letter-spacing:0px;">A<i class="d1">1</i><i class="hy">-</i>R<i class="dn">5</i><i class="hy">-</i>L<i class="d1">1</i></div>
<div class="c med" id="r15c_qty" style="left:1474px;top:17px;letter-spacing:0px;"><i class="dn">8</i><i class="dn">5</i></div>
<div class="c" id="r15c_res" style="left:1738px;top:17px;letter-spacing:0px;"><i class="dn">8</i></div>
<div class="c" id="r15c_av" style="left:2015px;top:17px;letter-spacing:0px;"><i class="dn">7</i><i class="dn">7</i></div>
</div>
<div class="row" style="top:1266px">
<div class="c" id="r16c_sku" style="left:17px;top:17px;letter-spacing:0.15px;">ING-FLOUR-001</div>
<div class="c" id="r16c_product" style="left:322px;top:17px;letter-spacing:0.42px;">Organic Bread Flour (25kg)</div>
<div class="c" id="r16c_wh" style="left:870px;top:17px;letter-spacing:0.55px;">Main Distribution Centre</div>
<div class="c" id="r16c_bin" style="left:1283px;top:17px;letter-spacing:0px;">A<i class="d1">1</i><i class="hy">-</i>R<i class="d1">1</i><i class="hy">-</i>L<i class="d1">1</i></div>
<div class="c med" id="r16c_qty" style="left:1474px;top:17px;letter-spacing:0px;"><i class="dn">4</i><i class="dn">5</i><i class="dn">0</i></div>
<div class="c" id="r16c_res" style="left:1738px;top:17px;letter-spacing:0px;"><i class="dn">6</i><i class="dn">0</i></div>
<div class="c" id="r16c_av" style="left:2015px;top:17px;letter-spacing:0px;"><i class="dn">3</i><i class="dn">9</i><i class="dn">0</i></div>
</div>
</div>
</body></html>
